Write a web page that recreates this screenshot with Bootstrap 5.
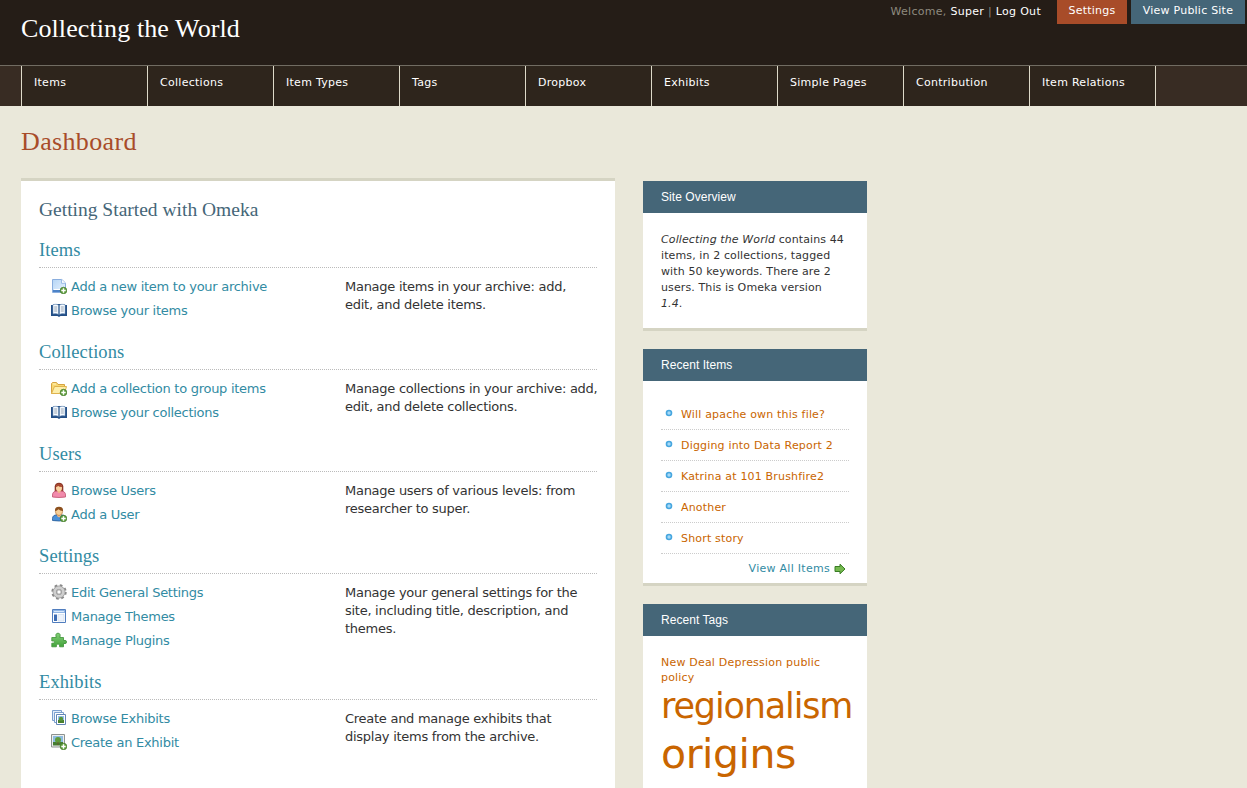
<!DOCTYPE html>
<html lang="en">
<head>
<meta charset="utf-8">
<title>Collecting the World - Dashboard</title>
<link rel="stylesheet" href="https://cdn.jsdelivr.net/npm/bootstrap@5.3.0/dist/css/bootstrap.min.css">
<style>
html,body{height:100%}
body{background:#eae8da;font-family:"DejaVu Sans",Verdana,sans-serif;font-size:13px;line-height:18px;color:#333;overflow:hidden}
a{text-decoration:none}
.serif{font-family:"Liberation Serif",Georgia,serif;font-weight:400;margin:0;white-space:nowrap}
.topbar{background:#251d17;height:66px;border-bottom:1px solid #716c62}
.site-title{font-size:26px;line-height:30px;color:#fff;padding:14px 0 0 21px;letter-spacing:.1px}
.user-bar{font-size:11px;line-height:16px;color:#8e8a7f}
.user-bar a{color:#fff}
.welcome{padding-top:4px;margin-right:16px;white-space:nowrap;letter-spacing:.3px}
.tab{height:24px;line-height:22px;text-align:center;white-space:nowrap;letter-spacing:.22px}
.tab-set{background:#a84c29;width:70px;margin-right:4px}
.tab-pub{background:#456678;width:114px;margin-right:2px}
.mainnav{background:#382c23;height:40px;padding-left:21px;font-size:11px;letter-spacing:.28px}
.mainnav a{width:126px;border-left:1px solid #dedac9;background:#2e251c;color:#fff;padding:9px 0 0 12px;line-height:16px;white-space:nowrap}
.mainnav a:last-child{width:127px;border-right:1px solid #dedac9}
.page-title{font-size:26px;line-height:30px;color:#a84c29;padding:21px 0 0 21px;height:72px;letter-spacing:.35px}
.columns{padding-left:21px;gap:28px}
.primary{width:594px;height:610px;background:#fff;border-top:3px solid #d5d4c3;padding:17px 18px 0}
.intro{font-size:19.5px;line-height:24px;color:#456678;height:34px}
.section{margin-bottom:12px}
.section h2{font-size:18.5px;line-height:36px;height:36px;color:#328ba3;border-bottom:1px dotted #bbb;margin-bottom:6px;letter-spacing:.1px}
.links{width:306px;flex:none;padding-left:12px;letter-spacing:-.27px}
.links a{display:flex;align-items:center;height:24px;padding-top:2px;color:#328ba3;white-space:nowrap}
.links svg{width:16px;height:16px;margin:0 4px 2px 0;flex:none}
.desc{padding-top:4px;white-space:nowrap;letter-spacing:-.27px}
.sidebar{width:224px;padding-top:3px;font-size:11px;letter-spacing:.15px}
.panel{background:#fff;border-bottom:3px solid #d5d4c3;margin-bottom:18px}
.panel:last-child{border:0;margin:0}
.panel h2{background:#456678;color:#fff;font:12px/32px "Liberation Sans",Arial,sans-serif;letter-spacing:.05px;height:32px;padding-left:18px;margin:0}
.overview{padding:19px 0 16px 18px;line-height:16px;white-space:nowrap;letter-spacing:.11px}
.recent{padding:18px 18px 0;height:202px}
.recent li{height:31px;border-bottom:1px dotted #ccc;line-height:30px;display:flex;align-items:center;padding-top:2px;letter-spacing:.18px}
.recent li a{color:#c96500;white-space:nowrap}
.recent li svg{width:8px;height:8px;margin:0 8px 4px 4px}
.view-all{color:#328ba3;display:flex;justify-content:flex-end;align-items:center;height:29px;padding:1px 3px 0 0;letter-spacing:.28px}
.view-all svg{width:12px;height:12px;margin-left:4px}
.tagcloud{padding:19px 0 0 18px;height:152px;line-height:15px;white-space:nowrap;letter-spacing:.2px;overflow:hidden}
.tagcloud a{color:#c96500}
.tagcloud .tag-lg{display:block;font-size:35px;line-height:43px;letter-spacing:-1.15px}
.tagcloud .tag-xl{display:block;font-size:41px;line-height:52px;letter-spacing:-.45px}
</style>
</head>
<body>
<svg width="0" height="0" class="position-absolute">
<defs>
<linearGradient id="gb" x1="0" y1="0" x2="1" y2="1"><stop offset="0" stop-color="#b5d5f5"/><stop offset="1" stop-color="#eaf4ff"/></linearGradient>
<linearGradient id="gg" x1="0" y1="0" x2="0" y2="1"><stop offset="0" stop-color="#83cf77"/><stop offset="1" stop-color="#43a33a"/></linearGradient>
<g id="plus"><circle cx="12.5" cy="12.5" r="3.3" fill="#5f9f3d" stroke="#447a2b" stroke-width=".7"/><path d="M10.3 12.5h4.4M12.5 10.3v4.4" stroke="#fff" stroke-width="1.4"/></g>
<symbol id="page-add" viewBox="0 0 16 16"><path d="M1.5 1.500h9.300l3.700 3.500v9.500h-13z" fill="url(#gb)" stroke="#8aaede"/><path d="M10.500 1.500v3.800h4" fill="#fff" stroke="#9bbce6"/><path d="M2 12h8v2H2z" fill="#4d83c8"/><path d="M3 11.500h7" stroke="#fff"/><use href="#plus"/></symbol>
<symbol id="book" viewBox="0 0 16 16"><path d="M0 3h2v-1h12v1h2v11h-6.500l-1.500 1-1.500-1H0z" fill="#234f87"/><path d="M2 2.500q3.500-1 5.700.7v9.300q-2.300-1.500-5.700-.7zM14 2.500q-3.500-1-5.700.7v9.300q2.300-1.500 5.700-.7z" fill="#f5faff" stroke="#7d9dc2" stroke-width=".5"/><path d="M3.200 5h3M3.200 7h3M3.200 9h3M9.800 5h3M9.800 7h3M9.800 9h3" stroke="#8f9cab" stroke-width=".9"/><path d="M8 3v10" stroke="#345d8d" stroke-width=".8"/></symbol>
<symbol id="folder-add" viewBox="0 0 16 16"><path d="M.5 13.500v-10l1-1h4l1.500 2h6.500v9z" fill="#f8d873" stroke="#d5a340"/><path d="M3.500 6.500h12l-2 7h-13z" fill="#fdeeaa" stroke="#dfb34e"/><path d="M2 4h3" stroke="#fff4bc"/><use href="#plus"/></symbol>
<symbol id="user-f" viewBox="0 0 16 16"><path d="M3.700 10V4.500Q4 .7 8 .7t4.300 3.800V10z" fill="#8e3828"/><path d="M1.500 15v-2q0-4 5-4h3q5 0 5 4v2q-6.500 1-13 0z" fill="#f18bac" stroke="#bf526f" stroke-width=".8"/><path d="M6.500 8h3v2l-1.500 1.200L6.500 10z" fill="#efb985"/><ellipse cx="8" cy="5.900" rx="3" ry="3.300" fill="#f9d3a1"/><path d="M5 5q0-3 3-3t3 3q-3 0-4-1.300Q6.500 5 5 5z" fill="#a9442c"/></symbol>
<symbol id="user-add" viewBox="0 0 16 16"><path d="M1.500 14.500v-2q0-3.700 5-3.700h3q5 0 5 3.700v2q-6.500 1-13 0z" fill="#4b91d9" stroke="#255994" stroke-width=".8"/><path d="M6 8h4v2l-2 1.500L6 10z" fill="#efb985"/><ellipse cx="8" cy="5.500" rx="3.600" ry="4" fill="#f8cf97" stroke="#a8692d" stroke-width=".6"/><path d="M4 5Q3.700.8 8 .8T12 5q-3-.1-4.500-1.700Q6 5 4 5z" fill="#8c501e"/><use href="#plus"/></symbol>
<symbol id="gear" viewBox="0 0 16 16"><circle cx="8" cy="8" r="6.300" fill="none" stroke="#888" stroke-width="2.800" stroke-dasharray="2.500 2.450"/><circle cx="8" cy="8" r="4.400" fill="none" stroke="#999" stroke-width="4"/><circle cx="8" cy="8" r="4.300" fill="none" stroke="#cfcfcf" stroke-width="2.800"/><circle cx="8" cy="8" r="2.200" fill="#fff" stroke="#888" stroke-width=".8"/></symbol>
<symbol id="layout" viewBox="0 0 16 16"><path d="M1.500 1.500h13v13h-13z" fill="#fff" stroke="#507dbe"/><path d="M2 2h12v3H2z" fill="#8fb5e5"/><path d="M3 3h10v1H3z" fill="#d5e6fa"/><path d="M3 6.500h3v6.500H3z" fill="#3c6cb4"/><path d="M7 6.500h6v6.500H7z" fill="#edf3fb" stroke="#c7d7eb" stroke-width=".6"/></symbol>
<symbol id="plugin" viewBox="0 0 16 16"><path d="M.8 5.500h4.400Q4 1.200 7 1.200t1.900 4.300h3.600v3Q15.600 7.700 15.600 10t-3.100 1.500v3.300H8.600Q9.200 12 7 12t-1.600 2.800H.8v-3.600Q3.500 11.800 3.500 10T.8 9z" fill="url(#gg)" stroke="#3b9035" stroke-width=".8"/></symbol>
<symbol id="pictures" viewBox="0 0 16 16"><path d="M1.500.5h9v10h-9z" fill="#e3edf9" stroke="#7b9fcf"/><path d="M3.500 2.500h9v10h-9z" fill="#fff" stroke="#7b9fcf"/><path d="M5.500 4.500h9v10h-9z" fill="#fff" stroke="#6487b6"/><path d="M7 6h6v4H7z" fill="#94bfea"/><path d="M7 10h6v3H7z" fill="#487e2e"/><circle cx="10" cy="9" r="2.200" fill="#57953a"/></symbol>
<symbol id="picture-add" viewBox="0 0 16 16"><path d="M.5.5h13v12.500H.5z" fill="#eee" stroke="#8c9290"/><path d="M2 2h10v6H2z" fill="#8dbce0"/><path d="M2 8h10v3.500H2z" fill="#447d31"/><circle cx="7" cy="6" r="3" fill="#5e9b3b"/><path d="M6.500 8h1v3h-1z" fill="#6a5630"/><use href="#plus"/></symbol>
<symbol id="dot" viewBox="0 0 8 8"><circle cx="4" cy="4" r="3.300" fill="#46a6df"/><circle cx="4" cy="4" r="1.700" fill="#a5d9f7"/></symbol>
<symbol id="arrow" viewBox="0 0 12 12"><path d="M1 3.500h5V1.200L11 6l-5 4.800V8.500H1z" fill="#75b94f" stroke="#397d24"/></symbol>
</defs>
</svg>
<header class="topbar d-flex justify-content-between">
  <h1 class="serif site-title">Collecting the World</h1>
  <div class="user-bar d-flex">
    <div class="welcome">Welcome, <a href="#">Super</a> | <a href="#">Log Out</a></div>
    <a class="tab tab-set" href="#">Settings</a><a class="tab tab-pub" href="#">View Public Site</a>
  </div>
</header>
<nav class="mainnav d-flex">
  <a href="#">Items</a><a href="#">Collections</a><a href="#">Item Types</a><a href="#">Tags</a><a href="#">Dropbox</a><a href="#">Exhibits</a><a href="#">Simple Pages</a><a href="#">Contribution</a><a href="#">Item Relations</a>
</nav>
<h1 class="serif page-title">Dashboard</h1>
<div class="columns d-flex align-items-start">
  <main class="primary">
    <h2 class="serif intro">Getting Started with Omeka</h2>
    <section class="section"><h2 class="serif">Items</h2>
      <div class="d-flex"><div class="links"><a href="#"><svg><use href="#page-add"/></svg>Add a new item to your archive</a><a href="#"><svg><use href="#book"/></svg>Browse your items</a></div>
      <div class="desc">Manage items in your archive: add,<br>edit, and delete items.</div></div></section>
    <section class="section"><h2 class="serif">Collections</h2>
      <div class="d-flex"><div class="links"><a href="#"><svg><use href="#folder-add"/></svg>Add a collection to group items</a><a href="#"><svg><use href="#book"/></svg>Browse your collections</a></div>
      <div class="desc">Manage collections in your archive: add,<br>edit, and delete collections.</div></div></section>
    <section class="section"><h2 class="serif">Users</h2>
      <div class="d-flex"><div class="links"><a href="#"><svg><use href="#user-f"/></svg>Browse Users</a><a href="#"><svg><use href="#user-add"/></svg>Add a User</a></div>
      <div class="desc">Manage users of various levels: from<br>researcher to super.</div></div></section>
    <section class="section"><h2 class="serif">Settings</h2>
      <div class="d-flex"><div class="links"><a href="#"><svg><use href="#gear"/></svg>Edit General Settings</a><a href="#"><svg><use href="#layout"/></svg>Manage Themes</a><a href="#"><svg><use href="#plugin"/></svg>Manage Plugins</a></div>
      <div class="desc">Manage your general settings for the<br>site, including title, description, and<br>themes.</div></div></section>
    <section class="section"><h2 class="serif">Exhibits</h2>
      <div class="d-flex"><div class="links"><a href="#"><svg><use href="#pictures"/></svg>Browse Exhibits</a><a href="#"><svg><use href="#picture-add"/></svg>Create an Exhibit</a></div>
      <div class="desc">Create and manage exhibits that<br>display items from the archive.</div></div></section>
  </main>
  <aside class="sidebar">
    <div class="panel"><h2>Site Overview</h2>
      <div class="overview"><em>Collecting the World</em> contains 44<br>items, in 2 collections, tagged<br>with 50 keywords. There are 2<br>users. This is Omeka version<br><em>1.4</em>.</div></div>
    <div class="panel"><h2>Recent Items</h2>
      <div class="recent"><ul class="list-unstyled m-0">
        <li><svg><use href="#dot"/></svg><a href="#">Will apache own this file?</a></li>
        <li><svg><use href="#dot"/></svg><a href="#">Digging into Data Report 2</a></li>
        <li><svg><use href="#dot"/></svg><a href="#">Katrina at 101 Brushfire2</a></li>
        <li><svg><use href="#dot"/></svg><a href="#">Another</a></li>
        <li><svg><use href="#dot"/></svg><a href="#">Short story</a></li></ul>
        <a class="view-all" href="#">View All Items<svg><use href="#arrow"/></svg></a></div></div>
    <div class="panel"><h2>Recent Tags</h2>
      <div class="tagcloud"><a href="#">New Deal</a> <a href="#">Depression</a> <a href="#">public<br>policy</a><a class="tag-lg" href="#">regionalism</a><a class="tag-xl" href="#">origins</a></div></div>
  </aside>
</div>
<script src="https://cdn.jsdelivr.net/npm/bootstrap@5.3.0/dist/js/bootstrap.bundle.min.js"></script>
</body>
</html>
